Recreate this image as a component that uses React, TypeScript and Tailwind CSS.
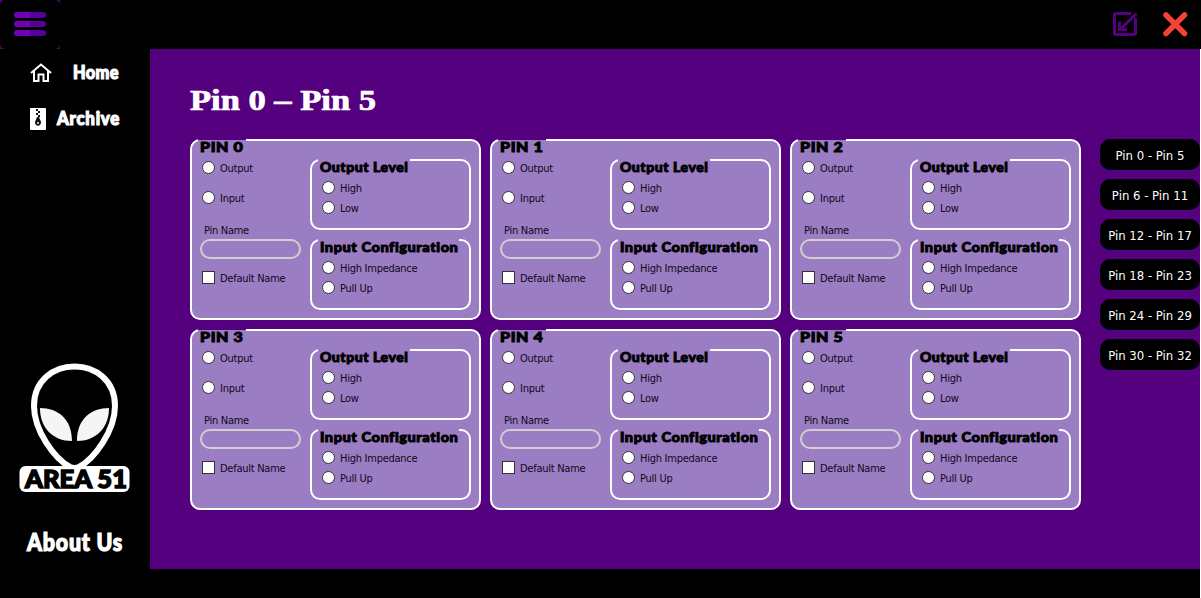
import React from "react";

const UI = "font-['DejaVu_Sans_Condensed','DejaVu_Sans',sans-serif] [font-stretch:condensed]";

function Choice({ label, square = false }: { label: string; square?: boolean }) {
  return (
    <label className="flex h-5 items-start pt-[2px]">
      <span className={`size-[13px] shrink-0 border border-[#333] bg-white ${square ? "" : "rounded-full"}`} />
      <span className="ml-[5px] whitespace-nowrap text-[11px] leading-4 tracking-[-0.26px] text-[#100818]">{label}</span>
    </label>
  );
}

function Legend({ text, gap, scale }: { text: string; gap: string; scale: string }) {
  return (
    <div className={`absolute -top-[2px] left-[6px] flex h-[18px] items-start bg-[#9b7dc3] ${gap}`}>
      <span className={`ml-[2px] inline-block origin-left whitespace-nowrap font-['Lato',sans-serif] text-[13px] font-black leading-[17px] text-black [-webkit-text-stroke:0.9px_black] ${scale}`}>
        {text}
      </span>
    </div>
  );
}

function SubGroup({ title, gap, scale, options }: { title: string; gap: string; scale: string; options: string[] }) {
  return (
    <div className="relative h-[71px] w-[161px] rounded-[10px] border-2 border-white pl-[10px] pt-[18px]">
      <Legend text={title} gap={gap} scale={scale} />
      {options.map((o) => (
        <Choice key={o} label={o} />
      ))}
    </div>
  );
}

function PinCard({ n }: { n: number }) {
  return (
    <section className="relative flex h-[181px] w-[291px] rounded-[10px] border-2 border-white bg-[#9b7dc3]">
      <Legend text={`PIN ${n}`} gap="w-12 border-t border-[#55007f]" scale="-mt-px scale-x-[1.23] tracking-[0.5px]" />
      <div className="w-[118px] pl-2 pt-[18px]">
        <div className="pl-[2px]">
          <Choice label="Output" />
          <div className="h-[10px]" />
          <Choice label="Input" />
        </div>
        <div className="mt-3 h-[18px] pl-1 text-[11px] leading-5 tracking-[-0.28px] text-[#100818]">Pin Name</div>
        <div className="h-5 w-[101px] rounded-[10px] border-2 border-[#d0d0d0]" />
        <div className="mt-[10px] pl-[2px]">
          <Choice label="Default Name" square />
        </div>
      </div>
      <div className="flex flex-col gap-[9px] pt-[18px]">
        <SubGroup title="Output Level" gap="w-[92px]" scale="scale-x-[1.08] tracking-[0.5px]" options={["High", "Low"]} />
        <SubGroup title="Input Configuration" gap="w-[141px]" scale="scale-x-[1.12] tracking-[0.5px]" options={["High Impedance", "Pull Up"]} />
      </div>
    </section>
  );
}

function Header() {
  return (
    <header className="flex h-[49px] items-start justify-between bg-black">
      <div className="flex h-[49px] w-[60px] bg-[#55007f]">
        <div className="flex w-full flex-col gap-[3px] rounded-[5px] bg-black pl-[14px] pt-3">
          {[0, 1, 2].map((i) => (
            <span key={i} className="h-[6px] w-8 rounded-full bg-[linear-gradient(90deg,#7200b8_50%,#55009a_50%)]" />
          ))}
        </div>
      </div>
      <div className="flex gap-[25px] pr-[13px] pt-3">
        <svg width="25" height="25" viewBox="0 0 25 25" fill="none" stroke="#55007f" strokeWidth="3">
          <path d="M18 1.500H3Q1.500 1.500 1.500 3V21Q1.500 22.500 3 22.500H21Q22.500 22.500 22.500 21V6" />
          <path d="M23.500 1.500L7 17.500" />
          <path d="M6.500 9.500V17.500H14" />
        </svg>
        <svg width="25" height="25" viewBox="0 0 25 25" stroke="#f44336" strokeWidth="5.500" strokeLinecap="round">
          <path d="M3 3L21.500 21.500M21.500 3L3 21.500" />
        </svg>
      </div>
    </header>
  );
}

const NAV = "inline-block origin-left whitespace-nowrap font-['Lato',sans-serif] font-black text-white [-webkit-text-stroke:1.2px_white]";

function Sidebar() {
  return (
    <aside className="flex h-[549px] w-[150px] flex-col bg-black">
      <div className="flex h-[46px] items-center pl-[30px]">
        <svg className="mt-[2px]" width="22" height="20" viewBox="0 0 22 20" fill="none" stroke="#fff" strokeWidth="2">
          <path d="M1 10L11 1.500L21 10M4 8V18H8.500V11.500H13.500V18H18V8" />
        </svg>
        <span className={`ml-[21px] text-[19px] tracking-[0.4px] scale-x-[.86] ${NAV}`}>Home</span>
      </div>
      <div className="flex h-[46px] items-center pl-[30px]">
        <svg className="mt-[2px]" width="16" height="22" viewBox="0 0 16 22">
          <rect width="16" height="22" rx="1" fill="#fff" />
          <path d="M6 1h2v2H6zM8 3h2v2H8zM6 5h2v2H6zM8 7h2v2H8z" fill="#111" />
          <path d="M7 9h2l2 5c0 5-6 5-6 0z" fill="#111" />
          <path d="M7 14h2v2H7z" fill="#bbb" />
        </svg>
        <span className={`ml-[11px] text-[19px] tracking-[0.8px] scale-x-[.89] ${NAV}`}>Archive</span>
      </div>
      <svg className="ml-[19px] mt-[222px] shrink-0" width="111" height="130" viewBox="0 0 111 130">
        <path d="M55.500 3.500C35 3.500 15 17 15 43C15 68 36 96 51 104Q55.500 106 60 104C75 96 96 68 96 43C96 17 76 3.500 55.500 3.500Z" fill="#000" stroke="#fff" strokeWidth="6" />
        <path d="M21 45C39 45 53 56 53 78C34 78 21 65 21 45ZM90 45C72 45 58 56 58 78C77 78 90 65 90 45Z" fill="#f5f5f5" />
        <rect x="0.500" y="103" width="110" height="26" rx="6" fill="#fff" />
        <text x="6" y="124.500" textLength="102" lengthAdjust="spacingAndGlyphs" fontFamily="Lato" fontWeight="900" fontSize="24.500" stroke="#000" strokeWidth="1.400">AREA 51</text>
      </svg>
      <div className="pl-[27px] pt-[32px] leading-[34px]">
        <span className={`text-[24px] tracking-[0.9px] scale-x-[.89] ${NAV}`}>About Us</span>
      </div>
    </aside>
  );
}

export default function App() {
  return (
    <div className={`h-[598px] w-[1201px] overflow-hidden bg-black ${UI}`}>
      <Header />
      <div className="flex">
        <Sidebar />
        <main className="h-[520px] w-[1050px] bg-[#55007f] pl-10 pt-[34px]">
          <h1 className="h-14 whitespace-nowrap text-white">
            <span className="inline-block origin-left scale-x-[1.19] font-['Liberation_Serif',serif] text-[29px] font-bold leading-[34px] [-webkit-text-stroke:0.7px_white]">Pin 0 – Pin 5</span>
          </h1>
          <div className="flex gap-[19px]">
            <div className="grid grid-cols-[repeat(3,291px)] gap-[9px]">
              {[0, 1, 2, 3, 4, 5].map((n) => (
                <PinCard key={n} n={n} />
              ))}
            </div>
            <nav className="flex flex-col gap-[9px]">
              {["Pin 0 - Pin 5", "Pin 6 - Pin 11", "Pin 12 - Pin 17", "Pin 18 - Pin 23", "Pin 24 - Pin 29", "Pin 30 - Pin 32"].map((t) => (
                <button key={t} className="h-[31px] w-[100px] whitespace-nowrap rounded-[10px] bg-black pt-[2px] text-[13px] text-white">
                  {t}
                </button>
              ))}
            </nav>
          </div>
        </main>
        <div className="h-[549px] w-px bg-white" />
      </div>
    </div>
  );
}
